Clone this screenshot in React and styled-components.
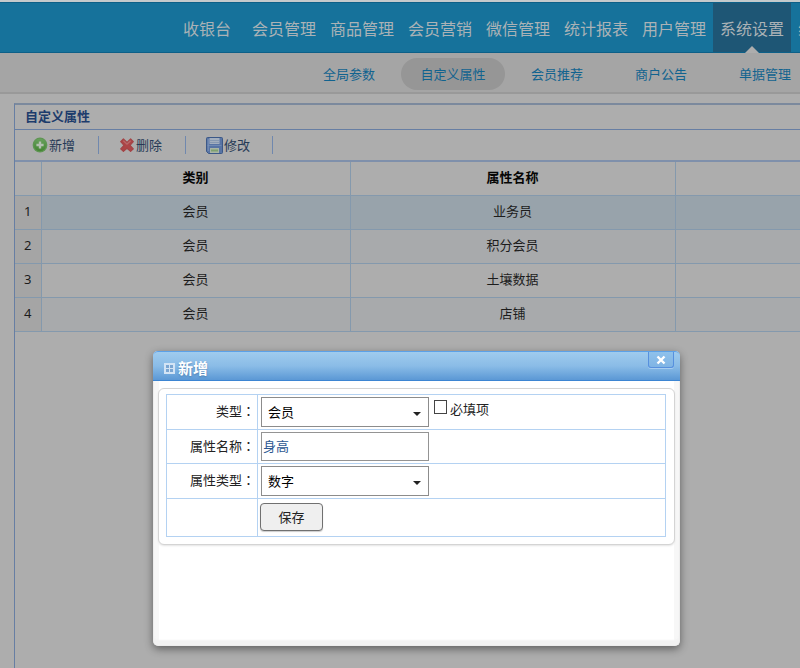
import React, { useState } from "react";
import styled, { createGlobalStyle } from "styled-components";

const color = {
  Page: "#adadad",
  Nav: "#16729b",
  NavActive: "#1e5675",
  SubNav: "#a5a5a5",
  Pill: "#969696",
  Link: "#11638f",
  PanelLine: "#677ea3",
  Cell: "#8499ad",
  Window: "#b4d2f2",
};

const menus = [
  "收银台",
  "会员管理",
  "商品管理",
  "会员营销",
  "微信管理",
  "统计报表",
  "用户管理",
  "系统设置",
  "终端管理",
];
const subMenus = ["全局参数", "自定义属性", "会员推荐", "商户公告", "单据管理"];
const rows = [
  { type: "会员", name: "业务员" },
  { type: "会员", name: "积分会员" },
  { type: "会员", name: "土壤数据" },
  { type: "会员", name: "店铺" },
];

const AddIcon = () => (
  <svg width="16" height="16" viewBox="0 0 16 16" aria-hidden="true">
    <defs>
      <linearGradient id="add" x1="0" y1="0" x2="0" y2="1">
        <stop offset="0" stopColor="#67a05c" />
        <stop offset="1" stopColor="#438532" />
      </linearGradient>
    </defs>
    <circle cx="8" cy="8" r="7.4" fill="#5f9553" />
    <circle cx="8" cy="8" r="6.2" fill="url(#add)" />
    <path d="M6.8 4.4h2.4v2.4h2.4v2.4H9.2v2.4H6.8V9.2H4.4V6.8h2.4z" fill="#b3bfb0" />
  </svg>
);

const RemoveIcon = () => (
  <svg width="16" height="16" viewBox="0 0 16 16" aria-hidden="true">
    <path
      d="M4.4 2 8 5.4 11.6 2 14.3 4.6 11 8.3l3.3 3.6-2.7 2.5L8 11.2l-3.6 3.2-2.7-2.5L5 8.3 1.7 4.6z"
      fill="#ad4547"
      stroke="#a34446"
      strokeWidth="1.2"
      strokeLinejoin="round"
    />
    <path d="M4.4 3.8 8 7.2l3.6-3.4" fill="none" stroke="#b9696a" strokeWidth="1.2" />
  </svg>
);

const SaveIcon = () => (
  <svg width="17" height="17" viewBox="0 0 17 17" aria-hidden="true">
    <path d="M.5 1.5q0-1 1-1h14q1 0 1 1v14q0 1-1 1H2.5l-2-2z" fill="#5874a4" stroke="#3c5887" />
    <path d="M3.5 1h10v6h-10z" fill="#a4afbe" />
    <path d="M4 3.5h9M4 5.5h9" stroke="#8799b1" />
    <path d="M1.5 8.5h14" stroke="#6f89b2" />
    <path d="M4 11h9v5H4z" fill="#a9b5a5" />
    <path d="M5 13.5h7" stroke="#7fa16f" strokeWidth="2" />
    <path d="M2.2 2v12" stroke="#7c93b8" />
  </svg>
);

const WindowIcon = () => (
  <svg width="11" height="11" viewBox="0 0 11 11" aria-hidden="true">
    <path d="M0 0h11v11H0z" fill="#d3e4f5" />
    <path d="M2 2h3v3H2zM6 2h3v3H6zM2 6h3v3H2zM6 6h3v3H6z" fill="#7ba6d2" />
  </svg>
);

const CloseIcon = () => (
  <svg width="10" height="10" viewBox="0 0 10 10" aria-hidden="true">
    <path d="m1.5 1.5 7 7M8.5 1.5l-7 7" stroke="#fff" strokeWidth="2.4" />
  </svg>
);

const tools = [
  { text: "新增", icon: <AddIcon /> },
  { text: "删除", icon: <RemoveIcon /> },
  { text: "修改", icon: <SaveIcon /> },
];

const App = () => {
  const [open, setOpen] = useState(true);
  const [required, setRequired] = useState(false);
  const [name, setName] = useState("身高");

  return (
    <>
      <GlobalStyle />
      <Page>
        <MainNav>
          {menus.map((text) => (
            <MenuLink href="#" key={text} $active={text === "系统设置"}>
              {text}
            </MenuLink>
          ))}
        </MainNav>
        <SubNav>
          {subMenus.map((text) => (
            <SubLink href="#" key={text} $active={text === "自定义属性"}>
              {text}
            </SubLink>
          ))}
        </SubNav>
        <Panel>
          <PanelTitle>自定义属性</PanelTitle>
          <Toolbar>
            {tools.map((tool) => (
              <ToolButton type="button" key={tool.text} onClick={() => setOpen(true)}>
                {tool.icon}
                <span>{tool.text}</span>
              </ToolButton>
            ))}
          </Toolbar>
          <Grid>
            <colgroup>
              <col className="number" />
              <col className="type" />
              <col className="name" />
              <col />
            </colgroup>
            <thead>
              <tr>
                <th></th>
                <th>类别</th>
                <th>属性名称</th>
                <th></th>
              </tr>
            </thead>
            <tbody>
              {rows.map((row, i) => (
                <GridRow key={row.name} $selected={i === 0}>
                  <td>{i + 1}</td>
                  <td>{row.type}</td>
                  <td>{row.name}</td>
                  <td></td>
                </GridRow>
              ))}
            </tbody>
          </Grid>
        </Panel>
      </Page>
      {open && (
        <Dialog role="dialog" aria-labelledby="dialog-title">
          <DialogHeader>
            <WindowIcon />
            <h2 id="dialog-title">新增</h2>
            <CloseButton type="button" aria-label="关闭" onClick={() => setOpen(false)}>
              <CloseIcon />
            </CloseButton>
          </DialogHeader>
          <FormBox onSubmit={(e) => e.preventDefault()}>
            <FormTable>
              <FormRow>
                <FormLabel htmlFor="type">类型<Colon>：</Colon></FormLabel>
                <FormField>
                  <Select id="type">
                    <option>会员</option>
                  </Select>
                  <CheckLabel>
                    <CheckBox
                      type="checkbox"
                      checked={required}
                      onChange={(e) => setRequired(e.target.checked)}
                    />
                    必填项
                  </CheckLabel>
                </FormField>
              </FormRow>
              <FormRow>
                <FormLabel htmlFor="name">属性名称<Colon>：</Colon></FormLabel>
                <FormField>
                  <TextInput id="name" value={name} onChange={(e) => setName(e.target.value)} />
                </FormField>
              </FormRow>
              <FormRow>
                <FormLabel htmlFor="kind">属性类型<Colon>：</Colon></FormLabel>
                <FormField>
                  <Select id="kind">
                    <option>数字</option>
                  </Select>
                </FormField>
              </FormRow>
              <FormRow>
                <span></span>
                <FormField $last>
                  <SaveButton type="submit">保存</SaveButton>
                </FormField>
              </FormRow>
            </FormTable>
          </FormBox>
        </Dialog>
      )}
    </>
  );
};

export default App;

const GlobalStyle = createGlobalStyle`
  * {
    box-sizing: border-box;
  }
  body {
    margin: 0;
    overflow-x: hidden;
    background-color: ${color.Page};
    font-family: "Noto Sans", "Noto Sans CJK SC", sans-serif;
    font-size: 13px;
    color: #1c1c1c;
  }
  button, input, select {
    font: inherit;
  }
`;

const Page = styled.div`
  display: flex;
  flex-direction: column;
  min-height: 100vh;
  overflow: hidden;
  border-top: 2px solid #c4cacc;
`;

const MainNav = styled.nav`
  display: flex;
  height: 51px;
  padding-left: 176px;
  background-color: ${color.Nav};
  border-top: 1px solid #0d6088;
  border-bottom: 1px solid #0d6088;
`;

const MenuLink = styled.a`
  flex: none;
  position: relative;
  padding: 0 7px;
  line-height: 52px;
  font-size: 16px;
  color: #abb2b6;
  text-decoration: none;
  background-color: ${(props) => (props.$active ? color.NavActive : "transparent")};
  &:first-child {
    margin-right: 7px;
  }
  &::after {
    content: "";
    display: ${(props) => (props.$active ? "block" : "none")};
    position: absolute;
    left: 50%;
    bottom: -1px;
    margin-left: -7px;
    border: 7px solid transparent;
    border-top: 0;
    border-bottom-color: ${color.Page};
  }
`;

const SubNav = styled.nav`
  display: flex;
  align-items: center;
  height: 41px;
  padding-top: 2px;
  padding-left: 297px;
  background-color: ${color.SubNav};
  border-bottom: 2px solid #999;
`;

const SubLink = styled.a`
  flex: none;
  width: 104px;
  height: 32px;
  line-height: 32px;
  border-radius: 16px;
  text-align: center;
  color: ${color.Link};
  text-decoration: none;
  background-color: ${(props) => (props.$active ? color.Pill : "transparent")};
`;

const Panel = styled.section`
  flex: 1;
  margin: 9px 0 0 14px;
  border-top: 2px solid #7b899d;
  border-left: 1px solid ${color.PanelLine};
`;

const PanelTitle = styled.h1`
  margin: 0;
  height: 25px;
  padding-left: 10px;
  line-height: 22px;
  font-size: 13px;
  font-weight: bold;
  color: #1d3c6c;
  border-bottom: 1px solid ${color.PanelLine};
`;

const Toolbar = styled.div`
  display: flex;
  align-items: center;
  height: 32px;
  border-bottom: 2px solid #7f90ab;
`;

const ToolButton = styled.button`
  display: flex;
  align-items: center;
  gap: 1px;
  width: 87px;
  height: 18px;
  padding: 0 0 0 20px;
  color: #263a56;
  background: none;
  border: 0;
  border-right: 1px solid #7088ae;
  cursor: pointer;
  &:first-child {
    width: 84px;
    padding-left: 17px;
  }
  span {
    padding-bottom: 2px;
  }
`;

const Grid = styled.table`
  width: 100%;
  table-layout: fixed;
  border-collapse: collapse;
  text-align: center;
  .number {
    width: 26px;
  }
  .type {
    width: 309px;
  }
  .name {
    width: 325px;
  }
  th,
  td {
    height: 34px;
    padding: 0 0 3px;
    border-right: 1px solid ${color.Cell};
    border-bottom: 1px solid ${color.Cell};
  }
  th:last-child,
  td:last-child {
    border-right: 0;
  }
  th {
    height: 33px;
    color: #050505;
  }
  td:first-child {
    background-color: #a5a5a5;
  }
`;

const GridRow = styled.tr`
  background-color: ${(props) => (props.$selected ? "#98a3ab" : color.Page)};
  &:nth-child(even) {
    background-color: #a8aaac;
  }
`;

const Dialog = styled.div`
  position: absolute;
  top: 351px;
  left: 153px;
  width: 527px;
  min-height: 295px;
  padding-bottom: 6px;
  background-color: #fff;
  border: 1px solid #ededed;
  border-top: 0;
  border-radius: 5px;
  box-shadow: 0 3px 9px rgba(0, 0, 0, 0.45), inset 0 -5px 2px #f2f2f2, inset 5px 0 1px #f7f7f7,
    inset -5px 0 1px #f7f7f7;
`;

const DialogHeader = styled.header`
  display: flex;
  align-items: center;
  gap: 3px;
  height: 30px;
  margin: 0 -1px;
  padding: 4px 6px 0 11px;
  background: linear-gradient(#9fcbee, #8abce7 50%, #5b98d5);
  border-top: 1px solid #5ba1e8;
  border-bottom: 1px solid #3c85d2;
  border-radius: 5px 5px 0 0;
  h2 {
    flex: 1;
    margin: 0;
    font-size: 15px;
    line-height: 20px;
    color: #fff;
    text-shadow: 0 1px 2px #4d7fb3;
  }
`;

const CloseButton = styled.button`
  display: flex;
  align-self: flex-start;
  align-items: center;
  justify-content: center;
  width: 26px;
  height: 16px;
  margin-top: -4px;
  padding: 0;
  background: linear-gradient(#8fc1eb, #7fb4e4);
  border: 1px solid #5790de;
  border-top: 0;
  border-radius: 0 0 3px 3px;
  box-shadow: 0 1px 0 #a7cdf0;
  cursor: pointer;
`;

const FormBox = styled.form`
  margin: 7px 4px 0;
  padding: 5px 8px 7px 7px;
  background-color: #fff;
  border: 1px solid #d4d4d4;
  border-radius: 6px;
  box-shadow: 0 1px 2px #e4e4e4;
`;

const FormTable = styled.div`
  border: 1px solid ${color.Window};
`;

const FormRow = styled.div`
  display: grid;
  grid-template-columns: 90px 1fr;
  & + & {
    border-top: 1px solid ${color.Window};
  }
`;

const FormLabel = styled.label`
  align-self: center;
  padding-right: 2px;
  padding-bottom: 3px;
  text-align: right;
  color: #222;
`;

/* full-width colon sits in the middle of its box */
const Colon = styled.span`
  font-family: "Noto Sans CJK TC", sans-serif;
`;

const FormField = styled.div`
  display: flex;
  align-items: flex-start;
  gap: 5px;
  min-height: ${(props) => (props.$last ? "37px" : "33px")};
  padding: ${(props) => (props.$last ? "4px 2px" : "2px 3px")};
  border-left: 1px solid ${color.Window};
`;

const Select = styled.select`
  appearance: none;
  width: 168px;
  height: 30px;
  padding: 0 6px;
  color: #000;
  background: url("data:image/svg+xml,%3Csvg xmlns='http://www.w3.org/2000/svg' width='8' height='4'%3E%3Cpath d='M0 0h8L4 4z' fill='%23222'/%3E%3C/svg%3E")
    no-repeat right 7px top 14px #fff;
  border: 1px solid #8c8c8c;
  border-radius: 0;
`;

const TextInput = styled.input`
  width: 168px;
  height: 29px;
  padding: 0 1px 2px;
  color: #2b5791;
  background-color: #fff;
  border: 1px solid #949494;
  border-radius: 0;
`;

const CheckLabel = styled.label`
  display: flex;
  align-items: center;
  gap: 3px;
  height: 22px;
  color: #222;
`;

const CheckBox = styled.input`
  appearance: none;
  width: 13px;
  height: 14px;
  margin: 0 0 3px;
  background-color: #fff;
  border: 1px solid #444;
  &:checked {
    background-color: #3c85d2;
  }
`;

const SaveButton = styled.button`
  width: 63px;
  height: 28px;
  padding: 0 0 2px;
  color: #222;
  background-color: #efefef;
  border: 1px solid #707070;
  border-radius: 4px;
  box-shadow: 0 1px 1px #ccc;
  cursor: pointer;
`;
